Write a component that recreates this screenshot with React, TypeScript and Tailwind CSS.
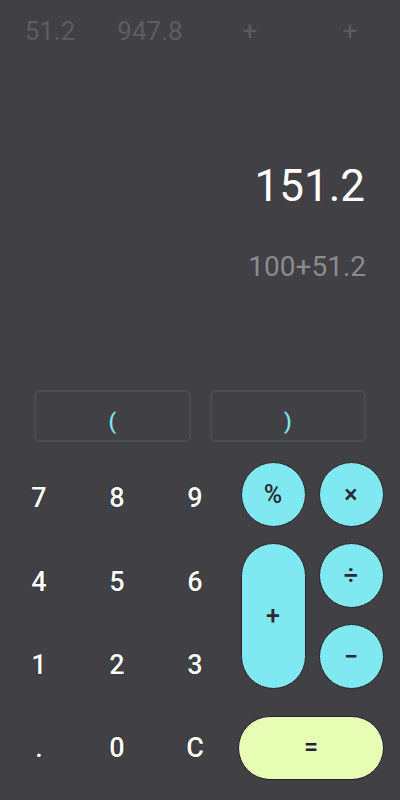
import React from "react";

const history = ["51.2", "947.8", "+", "+"];
const digits = ["7", "8", "9", "4", "5", "6", "1", "2", "3", ".", "0", "C"];

function Op({ label, className = "" }: { label: string; className?: string }) {
  return (
    <button
      className={`flex items-center justify-center rounded-full border border-[#2c2228] bg-[#80e8f1] text-[25px] font-medium text-[#2b2a30] ${className}`}
    >
      {label}
    </button>
  );
}

export default function App() {
  return (
    <div className="flex h-[800px] w-[400px] flex-col overflow-hidden bg-[#414045] font-['Roboto',sans-serif]">
      {/* history strip */}
      <div className="grid h-[62px] grid-cols-4 items-center text-center text-[26px] text-[#5d5d60]">
        {history.map((h, i) => (
          <span key={i}>{h}</span>
        ))}
      </div>

      {/* display */}
      <div className="mt-[102px] pr-[35px] text-right text-[44px] leading-[44px] text-white">151.2</div>
      <div className="mt-[45px] pr-[34px] text-right text-[28px] leading-[28px] text-[#8b8b8e]">100+51.2</div>

      {/* brackets */}
      <div className="mt-[109px] flex gap-[19px] px-[34px]">
        <button className="flex h-[52px] flex-1 items-center justify-center rounded-[6px] border-2 border-[#4b4c51] pt-[10px] text-[22px] font-medium text-[#7fe4ef]">
          (
        </button>
        <button className="flex h-[52px] flex-1 items-center justify-center rounded-[6px] border-2 border-[#4b4c51] pt-[10px] text-[22px] font-medium text-[#7fe4ef]">
          )
        </button>
      </div>

      {/* keypad */}
      <div className="mt-[13px] flex">
        <div className="grid h-[335px] grid-cols-[repeat(3,78px)] grid-rows-4 pt-[2px]">
          {digits.map((d) => (
            <button
              key={d}
              className="flex items-center justify-center text-[27px] font-medium text-white [text-shadow:0_0_1px_rgba(0,0,0,0.9)]"
            >
              {d}
            </button>
          ))}
        </div>

        <div className="flex flex-col pt-[7px]">
          <div className="grid grid-cols-[repeat(2,78px)] grid-rows-[65px_65px_65px] gap-y-[16px]">
            <Op label="%" className="mx-auto h-[65px] w-[65px]" />
            <Op label="×" className="mx-auto h-[65px] w-[65px]" />
            <Op label="+" className="row-span-2 mx-auto h-full w-[65px]" />
            <Op label="÷" className="mx-auto h-[65px] w-[65px]" />
            <Op label="−" className="col-start-2 mx-auto h-[65px] w-[65px]" />
          </div>
          <button className="ml-[4px] mt-[27px] flex h-[64px] w-[146px] items-center justify-center rounded-full border border-[#1f1d38] bg-[#e7fdb3] text-[25px] font-medium text-[#25223f]">
            =
          </button>
        </div>
      </div>
    </div>
  );
}
